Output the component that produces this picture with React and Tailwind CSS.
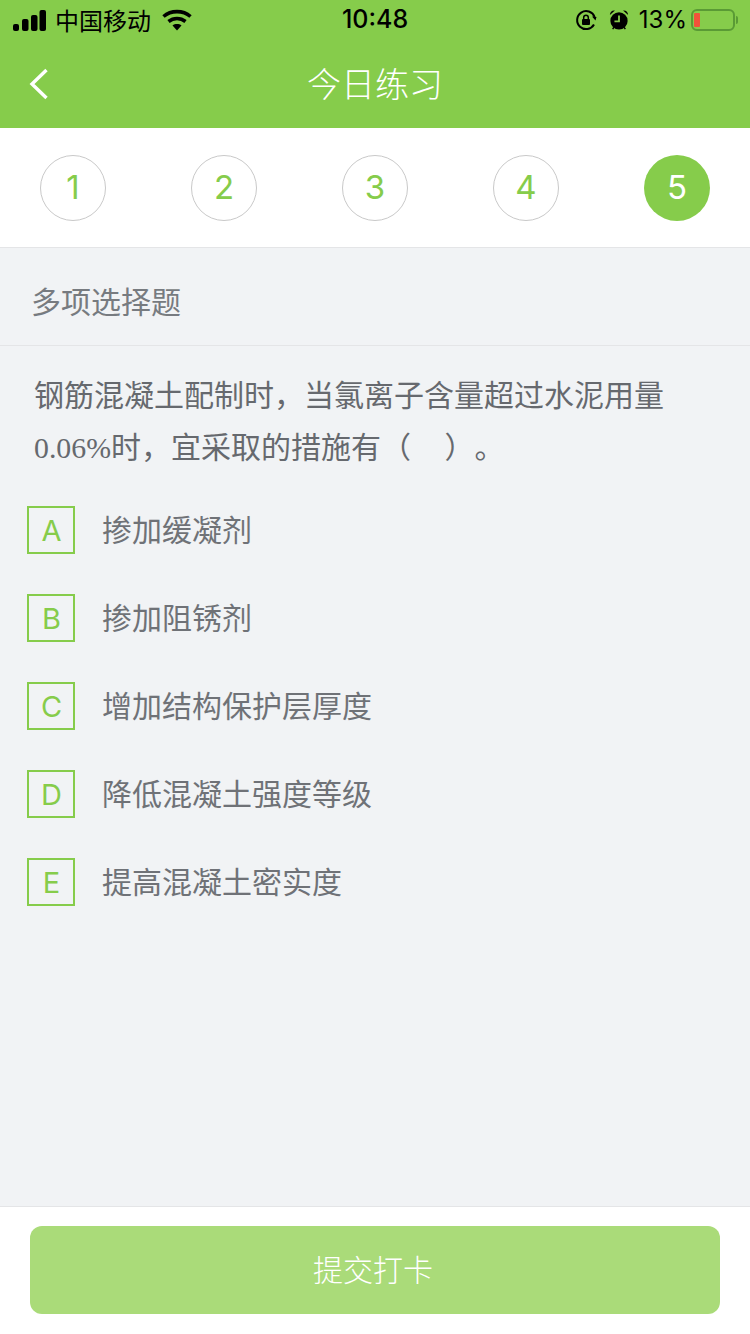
const cjk = "font-['Noto_Sans_CJK_SC',sans-serif]";

const options = [
    { key: "A", text: "掺加缓凝剂" },
    { key: "B", text: "掺加阻锈剂" },
    { key: "C", text: "增加结构保护层厚度" },
    { key: "D", text: "降低混凝土强度等级" },
    { key: "E", text: "提高混凝土密实度" },
];

const SignalIcon = () => (
    <svg width="33" height="21" viewBox="0 0 33 21" fill="#000">
        <rect x="0" y="14" width="6" height="7" rx="2" />
        <rect x="9" y="9" width="6.5" height="12" rx="2" />
        <rect x="18" y="5" width="6.5" height="16" rx="2" />
        <rect x="26.5" y="0" width="6.5" height="21" rx="2" />
    </svg>
);

const WifiIcon = () => (
    <svg width="30" height="22" viewBox="0 0 30 22" fill="none" stroke="#000" strokeWidth="3.6">
        <path d="M1.5 7.5C9 1 21 1 28.5 7.5" />
        <path d="M6.5 12.5C11.5 8.5 18.5 8.5 23.5 12.5" />
        <path d="M15 21.5L10.5 16.5C13 14.6 17 14.6 19.5 16.5Z" fill="#000" stroke="none" />
    </svg>
);

const RotationLockIcon = () => (
    <svg width="22" height="22" viewBox="0 0 22 22" fill="none" stroke="#000" strokeWidth="2">
        <path d="M19 15.5A9 9 0 1 1 19.6 8" />
        <path d="M17 7.5L21.5 8L20.5 11.5Z" fill="#000" stroke="none" />
        <rect x="7" y="10" width="8" height="6" rx="1" fill="#000" stroke="none" />
        <path d="M8.7 10V8.5a2.3 2.3 0 0 1 4.6 0V10" strokeWidth="1.5" />
    </svg>
);

const AlarmIcon = () => (
    <svg width="20" height="22" viewBox="0 0 22 24" fill="#000">
        <circle cx="11" cy="13" r="9.5" />
        <path d="M1 6.5C1 3 3.5 1 6.5 1.5Z" />
        <path d="M21 6.5C21 3 18.5 1 15.5 1.5Z" />
        <path d="M11 7V13.5H6" fill="none" stroke="#86cc4b" strokeWidth="2" />
        <path d="M4 22L5.5 20M18 22L16.5 20" stroke="#000" strokeWidth="1.6" />
    </svg>
);

const BatteryIcon = () => (
    <div className="flex items-center gap-[1px]">
        <div className="w-[44px] h-[22px] rounded-[6px] border-2 border-[#5a9a35] p-[2px] pl-[1px] flex">
            <div className="w-[6px] h-full rounded-[1px] bg-[#f0533a]"></div>
        </div>
        <div className="w-[2px] h-[8px] rounded-r-sm bg-[#5a9a35]"></div>
    </div>
);

const StatusBar = () => (
    <div className="relative h-[40px] flex items-center justify-between pl-[13px] pr-[12px] text-black">
        <div className="flex items-center">
            <SignalIcon />
            <span className={`ml-[9px] text-[24px] leading-none ${cjk}`}>中国移动</span>
            <span className="ml-[11px] flex"><WifiIcon /></span>
        </div>
        <span className="absolute left-0 right-0 text-center text-[25px] font-medium font-['Inter',sans-serif]">10:48</span>
        <div className="flex items-center">
            <RotationLockIcon />
            <span className="ml-[12px] flex"><AlarmIcon /></span>
            <span className="ml-[10px] mr-[4px] text-[24px] font-['Inter',sans-serif]">13%</span>
            <BatteryIcon />
        </div>
    </div>
);

const Header = () => (
    <div className="bg-[#86cc4b]">
        <StatusBar />
        <div className="relative h-[88px] flex items-center justify-center pb-[2px]">
            <svg className="absolute left-[29px] top-[28px]" width="20" height="32" viewBox="0 0 20 32" fill="none" stroke="#fff" strokeWidth="3.4">
                <path d="M17.5 2L3 16L17.5 30" />
            </svg>
            <span className={`text-[34px] leading-none text-white ${cjk} font-light`}>今日练习</span>
        </div>
    </div>
);

const Steps = () => (
    <div className="h-[120px] bg-white border-b border-[#e4e5e7] flex items-center justify-between px-[40px]">
        {[1, 2, 3, 4, 5].map((n) => (
            <div
                key={n}
                className={`w-[66px] h-[66px] rounded-full flex items-center justify-center text-[33px] font-['Inter',sans-serif] ${
                    n === 5 ? "bg-[#86cc4b] text-white" : "border border-[#c9c9c9] text-[#86cc4b]"
                }`}
            >
                {n}
            </div>
        ))}
    </div>
);

const App = () => {
    return (
        <div className={`w-[750px] h-[1334px] flex flex-col bg-[#f1f3f5] overflow-hidden ${cjk}`}>
            <Header />
            <Steps />

            <div className="flex-1 flex flex-col">
                <div className="h-[98px] border-b border-[#e4e5e7] flex items-center pl-[31px] text-[30px] text-[#777b80] pt-[8px]">
                    多项选择题
                </div>

                <div className="pl-[34px] pt-[21px] text-[30px] leading-[52px] text-[#66696e] [text-spacing-trim:space-all]">
                    <div>钢筋混凝土配制时，当氯离子含量超过水泥用量</div>
                    <div>
                        <span className="text-[29.8px] font-['Liberation_Serif',serif]">0.06%</span>时，宜采取的措施有（&nbsp;&nbsp;&nbsp;&nbsp;&nbsp;）。
                    </div>
                </div>

                <div className="pl-[27px] pt-[32px] flex flex-col gap-[40px]">
                    {options.map((opt) => (
                        <div key={opt.key} className="flex items-center h-[48px]">
                            <div className="w-[48px] h-[48px] border-2 border-[#86cc4b] flex items-center justify-center text-[29px] text-[#86cc4b] font-['Inter',sans-serif] pl-[1px] pt-[1px]">
                                {opt.key}
                            </div>
                            <span className="ml-[27px] text-[30px] leading-none text-[#6f7277] pb-[5px]">{opt.text}</span>
                        </div>
                    ))}
                </div>
            </div>

            <div className="h-[128px] bg-white border-t border-[#e4e5e7] px-[30px] pt-[19px]">
                <div className="h-[88px] rounded-[12px] bg-[#aadb79] flex items-center justify-center text-[30px] text-white font-light pr-[4px] pb-[4px]">
                    提交打卡
                </div>
            </div>
        </div>
    );
};

export default App;
